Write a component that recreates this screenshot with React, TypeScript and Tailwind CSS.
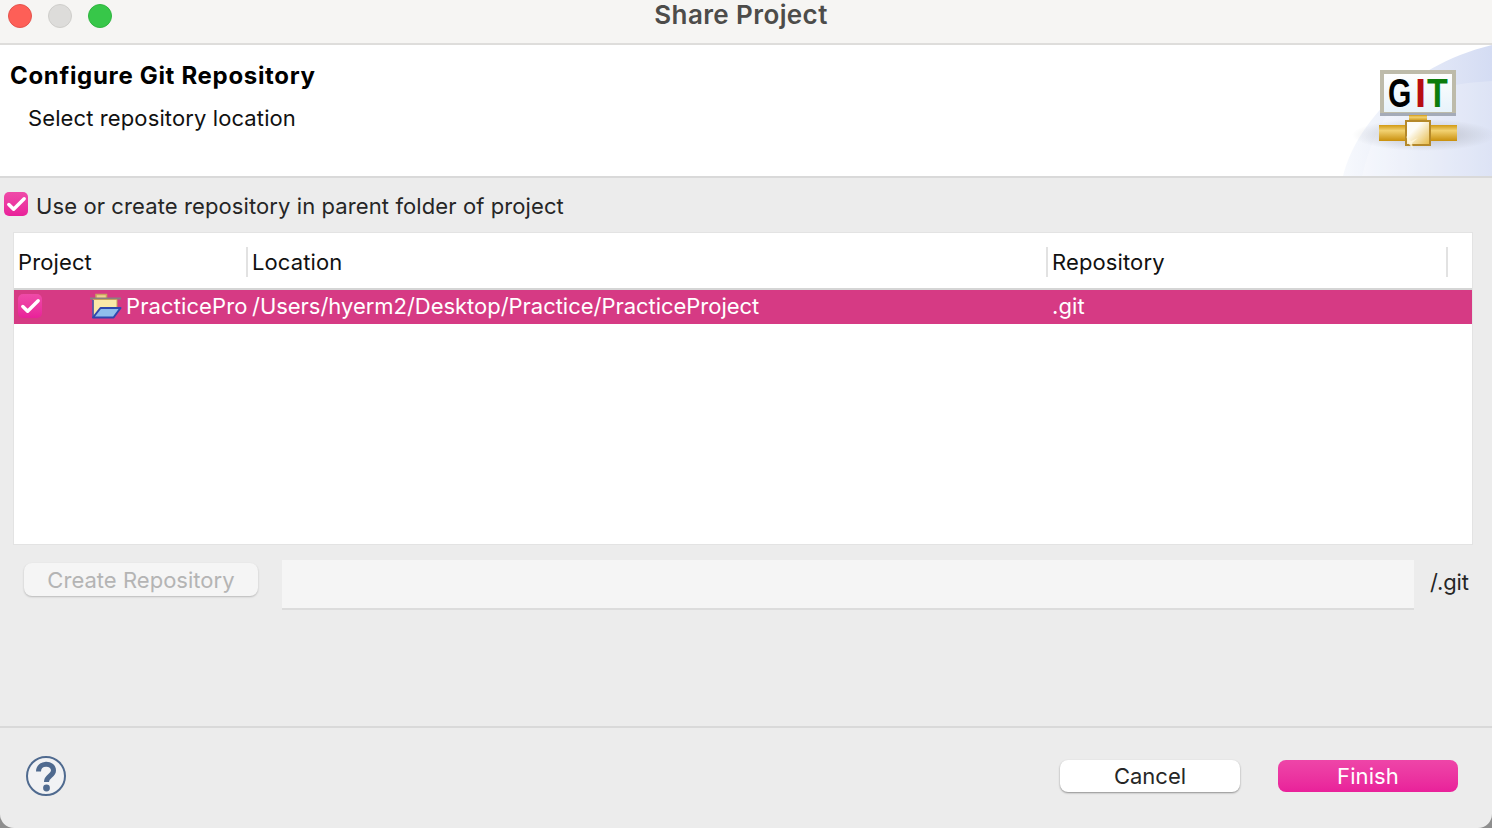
import { Check } from 'lucide-react'

const FONT = "font-['Inter','Liberation_Sans',sans-serif]"

function PinkCheck({ className }: { className: string }) {
  return (
    <span className={`flex shrink-0 items-center justify-center rounded-[5px] bg-gradient-to-b from-[#ef4aa8] to-[#e9209a] ${className}`}>
      <Check size={23} strokeWidth={3.6} className="text-white" />
    </span>
  )
}

function Banner() {
  return (
    <svg width="150" height="131" viewBox="0 0 150 131" className="absolute right-0 top-0">
      <defs>
        <linearGradient id="wash" x1="0" y1="0" x2="1" y2="0">
          <stop offset="0" stopColor="#f7f9fd" />
          <stop offset="1" stopColor="#d4dcf3" />
        </linearGradient>
        <linearGradient id="pipe" x1="0" y1="0" x2="0" y2="1">
          <stop offset="0" stopColor="#d29a14" />
          <stop offset="0.35" stopColor="#f2d272" />
          <stop offset="1" stopColor="#c98f0c" />
        </linearGradient>
        <linearGradient id="valve" x1="0" y1="0" x2="1" y2="1">
          <stop offset="0.35" stopColor="#fdfcf6" />
          <stop offset="1" stopColor="#e6b840" />
        </linearGradient>
        <linearGradient id="screen" x1="0" y1="0" x2="0" y2="1">
          <stop offset="0" stopColor="#ffffff" />
          <stop offset="1" stopColor="#e6f2fa" />
        </linearGradient>
        <radialGradient id="shade" cx="0.5" cy="0.5" r="0.5">
          <stop offset="0" stopColor="#a9adb8" stopOpacity="0.75" />
          <stop offset="1" stopColor="#a9adb8" stopOpacity="0" />
        </radialGradient>
      </defs>
      <path d="M1 131 C12 85 60 22 150 0 L150 131 Z" fill="url(#wash)" />
      <path d="M52 60 C80 44 115 38 150 36 L150 131 L20 131 C26 105 36 80 52 60 Z" fill="#ffffff" fillOpacity="0.22" />
      <ellipse cx="82" cy="90" rx="72" ry="16" fill="url(#shade)" />
      <rect x="40" y="27" width="72" height="42" fill="url(#screen)" stroke="#bdbbaa" strokeWidth="4" />
      <path d="M38 69.500 H114" stroke="#a4abb8" strokeWidth="3" />
      <text transform="translate(46 62) scale(0.75 1)" fontFamily="'Liberation Sans',sans-serif" fontSize="40" fontWeight="700" fill="#000000">G</text>
      <text x="73" y="62" fontFamily="'Liberation Sans',sans-serif" fontSize="40" fontWeight="700" fill="#b80d12">I</text>
      <text transform="translate(85 62) scale(0.85 1)" fontFamily="'Liberation Sans',sans-serif" fontSize="40" fontWeight="700" fill="#0c7c0c">T</text>
      <rect x="67" y="70" width="18" height="6" fill="url(#pipe)" />
      <rect x="37" y="80" width="78" height="16" fill="url(#pipe)" />
      <rect x="64" y="76" width="24" height="24" fill="url(#valve)" stroke="#b5892a" strokeWidth="2" />
      <path d="M64 91 L69 96 L76 93 L70 98 L71 104 L67 99 Z" fill="#fff7dc" fillOpacity="0.8" />
    </svg>
  )
}

function FolderIcon() {
  return (
    <svg width="32" height="26" viewBox="0 0 32 26" className="shrink-0">
      <path d="M6 5 V1.500 H16.500 V5" fill="#f0d08e" stroke="#c9a55f" strokeWidth="1.500" />
      <path d="M0 5.500 H31" stroke="#8a7f80" strokeWidth="2" />
      <path d="M3.500 6.500 H27 V15 H11 L4 24 H3.500 Z" fill="#fbe8a8" stroke="#c4a25c" strokeWidth="1" />
      <path d="M3 7 V24.500" stroke="#4058b0" strokeWidth="1.500" />
      <path d="M10.500 15 H30.500 L23.500 24.500 H3 Z" fill="#8fbdec" stroke="#2f47ae" strokeWidth="2" strokeLinejoin="round" />
    </svg>
  )
}

function HelpIcon() {
  return (
    <svg width="40" height="40" viewBox="0 0 40 40">
      <circle cx="20" cy="20" r="19" fill="#f1f2f4" stroke="#4f6a8f" strokeWidth="2" />
      <path d="M12.500 15.500 C12.500 6 27.500 6 27.500 14.500 C27.500 20 20.500 19.500 20.500 26" fill="none" stroke="#4f6a8f" strokeWidth="5" />
      <circle cx="20.500" cy="32" r="3.400" fill="#4f6a8f" />
    </svg>
  )
}

export default function App() {
  return (
    <div className={`h-[828px] w-[1492px] overflow-hidden bg-[#8e8e8e] ${FONT}`}>
      <div className="flex h-full flex-col rounded-b-[14px] bg-[#ececec]">
        <div className="relative flex h-[45px] shrink-0 items-center gap-[16px] border-b-2 border-[#dedddb] bg-[#f6f5f3] pb-[11px] pl-[8px]">
          <span className="h-[24px] w-[24px] rounded-full border border-[#e5534c] bg-[#fe5f57]" />
          <span className="h-[24px] w-[24px] rounded-full border border-[#cfcecb] bg-[#dddcda]" />
          <span className="h-[24px] w-[24px] rounded-full border border-[#2fb53f] bg-[#37c749]" />
          <span className="absolute left-0 right-[10px] top-[-1px] text-center text-[26px] leading-[31px] font-semibold tracking-[0.4px] text-[#4d4c4a]">
            Share Project
          </span>
        </div>

        <div className="relative h-[133px] shrink-0 border-b-2 border-[#d9d9d9] bg-white pl-[10px]">
          <Banner />
          <div className="relative pt-[15px] text-[24px] leading-[32px] font-bold tracking-[0.68px] text-black">Configure Git Repository</div>
          <div className="relative pl-[18px] pt-[11px] text-[22px] leading-[30px] tracking-[0.11px] text-[#111111]">Select repository location</div>
        </div>

        <div className="flex h-[54px] shrink-0 items-center gap-[8px] pl-[4px] pt-[2px]">
          <PinkCheck className="-mt-[4px] h-[24px] w-[24px]" />
          <span className="text-[22px] leading-[30px] tracking-[0.1px] text-[#262626]">Use or create repository in parent folder of project</span>
        </div>

        <div className="ml-[13px] h-[313px] w-[1460px] shrink-0 border border-[#e3e3e3] bg-white">
          <div className="flex h-[57px] items-center border-b-2 border-[#d5d5d5] pt-[3px] text-[22px] leading-[30px] tracking-[0.12px] text-[#111111]">
            <div className="w-[232px] pl-[4px]">Project</div>
            <div className="w-[800px] border-l-2 border-[#e2e2e2] pl-[4px]">Location</div>
            <div className="w-[402px] border-l-2 border-r-2 border-[#e2e2e2] pl-[4px]">Repository</div>
          </div>
          <div className="flex h-[34px] items-center bg-[#d63a84] pb-[2px] text-[22px] leading-[30px] tracking-[0.1px] text-white">
            <PinkCheck className="ml-[4px] h-[24px] w-[24px]" />
            <div className="ml-[48px] mr-[4px]">
              <FolderIcon />
            </div>
            <span className="w-[121px] shrink-0 overflow-hidden whitespace-nowrap">PracticePro</span>
            <span className="w-[800px] shrink-0 pl-[5px] tracking-[-0.03px]">/Users/hyerm2/Desktop/Practice/PracticeProject</span>
            <span className="pl-[5px]">.git</span>
          </div>
        </div>

        <div className="flex h-[181px] shrink-0 items-start pl-[24px] pt-[15px]">
          <button className="mt-[3px] h-[33px] w-[234px] rounded-[8px] bg-[#f5f5f5] text-[22px] leading-[30px] tracking-[0.03px] text-[#b4b4b4] shadow-[0_1px_2px_rgba(0,0,0,0.22)]">
            Create Repository
          </button>
          <div className="ml-[24px] h-[50px] w-[1132px] border-b-2 border-[#dcdcdc] bg-[#f5f5f5]" />
          <span className="ml-[16px] pt-[7px] text-[22px] leading-[30px] tracking-[-0.1px] text-[#262626]">/.git</span>
        </div>

        <div className="flex flex-1 items-center border-t-2 border-[#d9d9d9] pb-[4px] pl-[26px] pr-[34px]">
          <HelpIcon />
          <button className="ml-auto h-[32px] w-[180px] rounded-[8px] bg-white text-[22px] leading-[30px] text-[#262626] shadow-[0_1px_2px_rgba(0,0,0,0.4)]">
            Cancel
          </button>
          <button className="ml-[38px] h-[32px] w-[180px] rounded-[8px] bg-gradient-to-b from-[#ee45a8] to-[#e9209a] text-[22px] leading-[30px] tracking-[0.1px] text-white">
            Finish
          </button>
        </div>
      </div>
    </div>
  )
}
